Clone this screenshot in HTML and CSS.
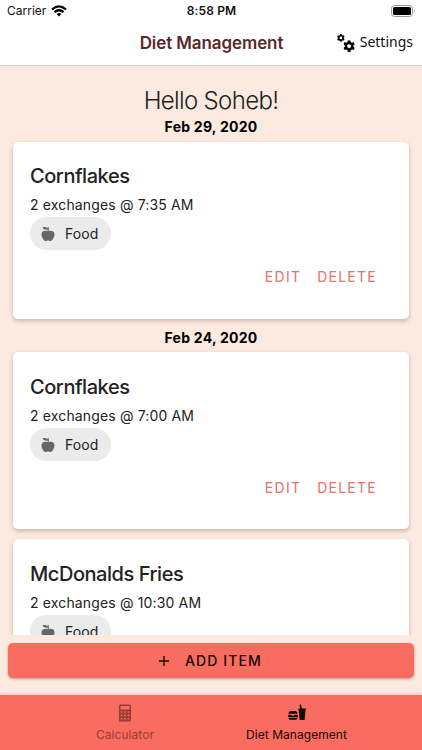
FILE: index.html
```html
<!DOCTYPE html>
<html lang="en">
<head>
<meta charset="utf-8">
<title>Diet Management</title>
<link rel="stylesheet" href="styles.css">
</head>
<body>
<svg width="0" height="0" class="defs">
  <symbol id="apple" viewBox="0 0 14 16">
    <path d="M7 5.200C9 4.200 13.500 4.200 13.500 8.300C13.500 11 11.500 15 9.500 15C8.500 15 8 14.500 7 14.500S5.500 15 4.500 15C2.500 15 .5 11 .5 8.300C.5 4.200 5 4.200 7 5.200Z"/>
    <path d="M7.800 5.500H6.600V3.600C4.500 4 2.500 3.300 1.500 1.500C3.500 .6 5.500 1 6.600 2.500V1H7.800Z"/>
  </symbol>
  <symbol id="gear" viewBox="-10 -10 20 20">
    <circle r="5.400" fill="none" stroke="currentColor" stroke-width="4"/>
    <path d="M-2.200-10H2.200L3-5H-3ZM-2.200 10H2.200L3 5H-3Z"/>
    <path transform="rotate(60)" d="M-2.200-10H2.200L3-5H-3ZM-2.200 10H2.200L3 5H-3Z"/>
    <path transform="rotate(120)" d="M-2.200-10H2.200L3-5H-3ZM-2.200 10H2.200L3 5H-3Z"/>
  </symbol>
</svg>
<div class="app">
  <div class="status">
    <div class="carrier"><span>Carrier</span>
      <svg class="wifi" viewBox="0 0 16 12" fill="none" stroke="#000" stroke-width="2.200"><path d="M1 4.500Q8-1.700 15 4.500M3.500 7.200Q8 3.300 12.500 7.200"/><path d="M5.600 9Q8 7 10.400 9L8 11.500Z" fill="#000" stroke="none"/></svg>
    </div>
    <div class="time">8:58 PM</div>
    <svg class="battery" viewBox="0 0 25 12"><rect x=".5" y=".5" width="21" height="11" rx="3" fill="none" stroke="#999"/><rect x="2" y="2" width="18" height="8" rx="1.500"/><path d="M23 4Q24.800 6 23 8Z" fill="#999"/></svg>
  </div>
  <header class="header">
    <h1>Diet Management</h1>
    <div class="settings">
      <svg class="gears" viewBox="0 0 18 18"><use href="#gear" width="7.800" height="7.800"/><use href="#gear" x="6.300" y="6.300" width="11.600" height="11.600"/></svg>
      <span>Settings</span>
    </div>
  </header>
  <main class="list">
    <h2>Hello Soheb!</h2>
    <div class="date">Feb 29, 2020</div>
    <section class="card">
      <h3>Cornflakes</h3>
      <p>2 exchanges @ 7:35 AM</p>
      <div class="chip"><svg><use href="#apple"/></svg><span>Food</span></div>
      <div class="actions"><span>EDIT</span><span>DELETE</span></div>
    </section>
    <div class="date later">Feb 24, 2020</div>
    <section class="card">
      <h3>Cornflakes</h3>
      <p>2 exchanges @ 7:00 AM</p>
      <div class="chip"><svg><use href="#apple"/></svg><span>Food</span></div>
      <div class="actions"><span>EDIT</span><span>DELETE</span></div>
    </section>
    <section class="card next">
      <h3>McDonalds Fries</h3>
      <p>2 exchanges @ 10:30 AM</p>
      <div class="chip"><svg><use href="#apple"/></svg><span>Food</span></div>
    </section>
  </main>
  <div class="add">
    <svg viewBox="0 0 10 10" stroke="#160604" stroke-width="1.300"><path d="M5 0V10M0 5H10"/></svg>
    <span>ADD ITEM</span>
  </div>
  <nav class="tabs">
    <div class="tab calc">
      <svg viewBox="0 0 18 18"><path fill-rule="evenodd" d="M4.200 .5H13.800Q15 .5 15 1.700V16.300Q15 17.500 13.800 17.500H4.200Q3 17.500 3 16.300V1.700Q3 .5 4.200 .5ZM4.500 2V5.500H13.500V2ZM4.800 7.200V8.800H6.400V7.200ZM8.200 7.200V8.800H9.800V7.200ZM11.600 7.200V8.800H13.200V7.200ZM4.800 10.600V12.200H6.400V10.600ZM8.200 10.600V12.200H9.800V10.600ZM11.600 10.600V12.200H13.200V10.600ZM4.800 14V15.600H6.400V14ZM8.200 14V15.600H9.800V14ZM11.600 14V15.600H13.200V14Z"/></svg>
      <span>Calculator</span>
    </div>
    <div class="tab diet">
      <svg viewBox="0 0 18 18"><path d="M.5 9.800Q.5 7 3.500 7H6.500Q9.500 7 9.500 9.800ZM.5 13.800H9.500Q9.500 15.800 7.800 15.800H2.200Q.5 15.800 .5 13.800Z"/><path d="M.2 10.700H3L4.800 12L6.500 10.700H9.800V13H.2Z"/><path d="M10.300 4.400H12.300L11.400 1.200L12.900 .3L14.100 4.400H18V6H17.500L16.600 16H11.600L10.700 6H10.300Z"/></svg>
      <span>Diet Management</span>
    </div>
  </nav>
</div>
</body>
</html>
```
FILE: styles.css
```css
* { box-sizing: border-box; }
body { margin: 0; font-family: Inter, "Liberation Sans", sans-serif; color: #222; }
h1, h2, h3, p { margin: 0; white-space: nowrap; }
.defs { position: absolute; }
.app { width: 422px; height: 750px; display: flex; flex-direction: column; overflow: hidden; background: #fce9e0; }
.status { height: 22px; flex: none; background: #fff; color: #111; display: grid; grid-template-columns: 1fr auto 1fr; align-items: center; padding: 0 6px 0 7px; font-size: 12px; line-height: 22px; }
.carrier { display: flex; align-items: center; gap: 5px; }
.wifi { width: 16px; height: 12px; }
.time { font-weight: 600; letter-spacing: 0.15px; }
.battery { width: 25px; height: 12px; justify-self: end; }
.header { height: 44px; flex: none; background: #fff; border-bottom: 1px solid #dccdcb; display: grid; grid-template-columns: 1fr auto 1fr; align-items: center; padding: 0 9px 0 10px; }
.header h1 { grid-column: 2; color: #5a2927; font-size: 17px; font-weight: 600; line-height: 40px; letter-spacing: -0.1px; padding-bottom: 1px; }
.settings { justify-self: end; display: flex; align-items: center; gap: 5px; color: #111; font: 14px/36px "Noto Sans", sans-serif; padding-bottom: 2px; }
.settings span { padding-bottom: 1px; }
.gears { width: 18px; height: 18px; }
.list { height: 569px; flex: none; overflow: hidden; padding: 20px 13px 0; }
.list h2 { font-size: 24px; font-weight: 300; line-height: 30px; text-align: center; letter-spacing: -0.65px; }
.date { height: 26px; color: #000; font-size: 14px; font-weight: 700; line-height: 22px; text-align: center; letter-spacing: 0.25px; }
.date.later { height: 33px; line-height: 37px; }
.card { height: 177px; padding: 21px 17px 0; background: #fff; border-radius: 5px; box-shadow: 0 2px 4px rgba(80,40,30,.28); }
.date.later + .card, .card.next { padding-top: 22px; }
.card.next { margin-top: 10px; }
.card h3 { font-size: 20px; font-weight: 500; line-height: 27px; letter-spacing: -0.45px; }
.card p { font-size: 14px; line-height: 20px; margin-top: 5px; letter-spacing: 0.15px; }
.chip { width: 81px; height: 33px; border-radius: 17px; margin-top: 2px; padding-left: 11px; display: flex; align-items: center; gap: 10px; background: #ebebeb; font-size: 14px; letter-spacing: 0.1px; }
.chip svg { width: 14px; height: 16px; fill: #666; }
.actions { display: flex; justify-content: flex-end; gap: 16px; margin-top: 17px; padding-right: 15px; color: #ed7064; font-size: 14px; line-height: 20px; letter-spacing: 1.25px; }
.add { height: 35px; flex: none; margin: 8px 8px 0; background: #f96d60; border-radius: 5px; box-shadow: 0 1px 3px rgba(80,30,20,.4); display: flex; align-items: center; justify-content: center; gap: 16px; padding-right: 1px; color: #160604; font-size: 14px; font-weight: 500; letter-spacing: 1.1px; }
.add svg { width: 10px; height: 10px; }
.tabs { height: 55px; flex: none; margin-top: 17px; background: #f96d60; box-shadow: 0 -1px 2px rgba(120,40,30,.18); display: grid; grid-template-columns: 171px 171px; justify-content: center; padding-top: 9px; }
.tab { display: flex; flex-direction: column; align-items: center; font-size: 12px; line-height: 16px; gap: 5px; letter-spacing: 0.05px; }
.tab svg { width: 18px; height: 18px; fill: currentColor; }
.calc { color: #9a3c35; padding-right: 1px; }
.diet { color: #160604; }
```
